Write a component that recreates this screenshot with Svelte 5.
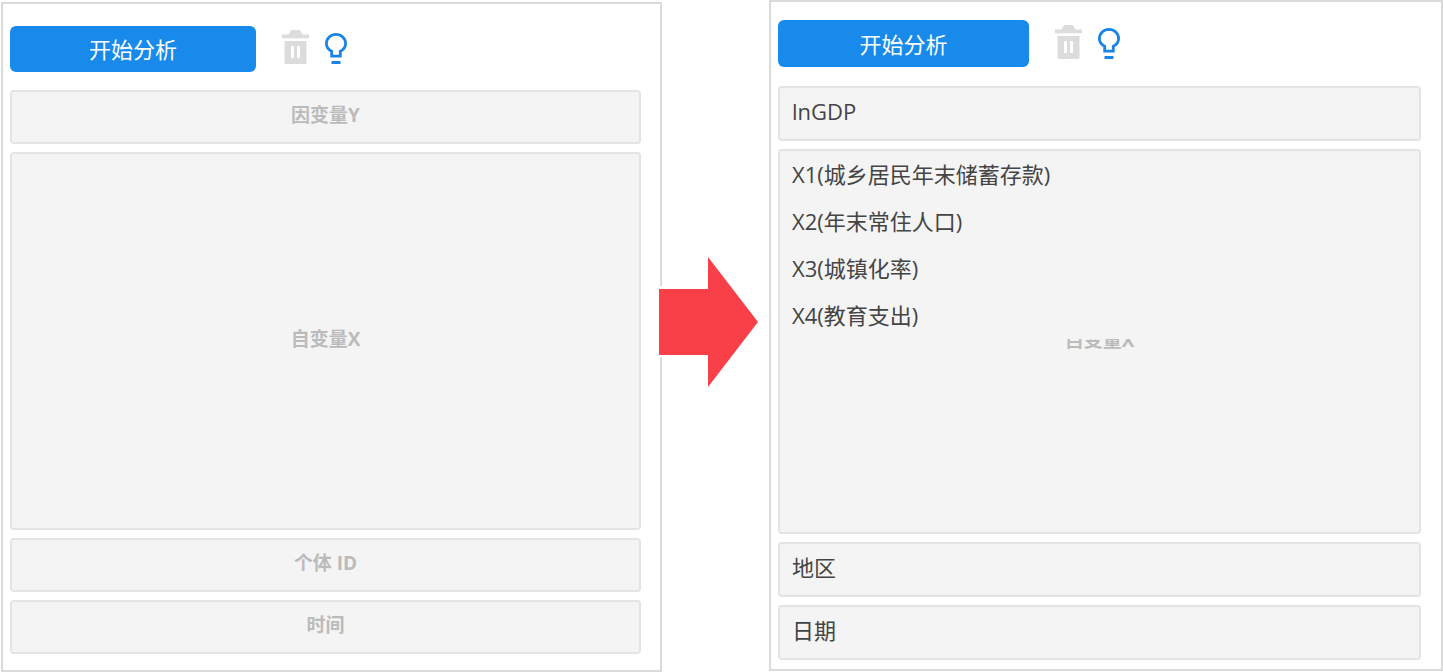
<script>
  // empty: fields before anything is dragged in, filled: same form with variables
  const panels = [
    {
      name: 'empty',
      fields: [
        { hint: '因变量Y', items: [] },
        { hint: '自变量X', items: [], tall: true },
        { hint: '个体 ID', items: [] },
        { hint: '时间', items: [] }
      ]
    },
    {
      name: 'filled',
      fields: [
        { hint: '因变量Y', items: ['lnGDP'] },
        {
          hint: '自变量X',
          items: ['X1(城乡居民年末储蓄存款)', 'X2(年末常住人口)', 'X3(城镇化率)', 'X4(教育支出)'],
          tall: true
        },
        { hint: '个体 ID', items: ['地区'] },
        { hint: '时间', items: ['日期'] }
      ]
    }
  ];
</script>

{#snippet panel(data)}
  <section class="panel {data.name}">
    <div class="toolbar">
      <button class="start">开始分析</button>
      <button class="icon trash" aria-label="清空">
        <svg viewBox="0 0 27 34" width="27" height="34">
          <path fill="#dcdcdc" d="M0 4.500h6.500L8.500 1q.6-1 1.800-1h6.400q1.200 0 1.800 1l2 3.500H27V8.200H0z" />
          <path fill="#dcdcdc" fill-rule="evenodd" d="M2.500 11h22v21.500a1.500 1.500 0 0 1-1.500 1.500H4a1.500 1.500 0 0 1-1.500-1.500zM9 16v12h3V16zM15 16v12h3V16z" />
        </svg>
      </button>
      <button class="icon" aria-label="提示">
        <svg viewBox="0 0 22 34" width="22" height="34">
          <path
            fill="none"
            stroke="#1a84e6"
            stroke-width="2.800"
            d="M6.700 26.100v-4.800C3.600 19.600 1.400 17.200 1.400 13.700a9.600 9.400 0 0 1 19.200 0c0 3.500-2.200 5.900-5.300 7.600v4.800z"
          />
          <path fill="#1a84e6" d="M6.500 31h9V34h-9z" />
        </svg>
      </button>
    </div>

    <div class="fields">
      {#each data.fields as field}
        <div class="field" class:tall={field.tall}>
          {#if field.tall || !field.items.length}
            <span class="hint">{field.hint}</span>
          {/if}
          {#if field.items.length}
            <ul>
              {#each field.items as item}
                <li>{item}</li>
              {/each}
            </ul>
          {/if}
        </div>
      {/each}
    </div>
  </section>
{/snippet}

<main>
  {@render panel(panels[0])}
  <svg class="arrow" viewBox="0 0 99 130" width="99" height="130" aria-hidden="true">
    <path fill="#fff" d="M0 29h8v71H0z" />
    <path fill="#f94048" d="M0 32h49V0l50 65-50 65V98H0z" />
  </svg>
  {@render panel(panels[1])}
</main>

<style>
:global(body) {
  background: #fff;
}
main {
  display: grid;
  grid-template-columns: 661fr 107px 674fr;
  padding-left: 1px;
  font-family: "Open Sans", "Noto Sans CJK SC", sans-serif;
  color: #444;
}

.panel {
  box-sizing: border-box;
  display: flex;
  flex-direction: column;
  border: 2px solid #dadada;
}
.empty {
  --row: 54px;
  --tall: 378px;
  --start: 46px;
  gap: 18px;
  margin-top: 2px;
  padding: 22px 19px 16px 7px;
}
.filled {
  --row: 55px;
  --tall: 385px;
  --start: 47px;
  gap: 19px;
  margin-bottom: 1px;
  padding: 18px 20px 9px 7px;
}

.toolbar {
  display: flex;
  align-items: center;
}
button {
  padding: 0;
  border: none;
  background: none;
  font-family: inherit;
  cursor: pointer;
}
.start {
  width: 39%;
  height: var(--start);
  padding-bottom: 2px;
  border-radius: 6px;
  background: #188aec;
  color: #fff;
  font-size: 22px;
}
.icon {
  margin: 0 0 4px 16px;
  line-height: 0;
}
.trash {
  margin-left: 26px;
}

.fields {
  display: flex;
  flex-direction: column;
  gap: 8px;
}
.field {
  position: relative;
  box-sizing: border-box;
  height: var(--row);
  border: 2px solid #e4e4e4;
  border-radius: 4px;
  background: #f4f4f4;
}
.tall {
  height: var(--tall);
}
.hint {
  position: absolute;
  inset: 0 0 6px 0;
  display: flex;
  align-items: center;
  justify-content: center;
  color: #bbb;
  font-size: 19px;
  font-weight: 700;
}
/* the list is opaque and covers the hint behind it */
ul {
  position: relative;
  margin: 0;
  padding: 0 12px;
  background: #f4f4f4;
  list-style: none;
}
li {
  height: 47px;
  font-size: 22px;
  line-height: 47px;
}

.arrow {
  position: relative;
  align-self: center;
  margin: 0 0 28px -3px;
}
</style>
